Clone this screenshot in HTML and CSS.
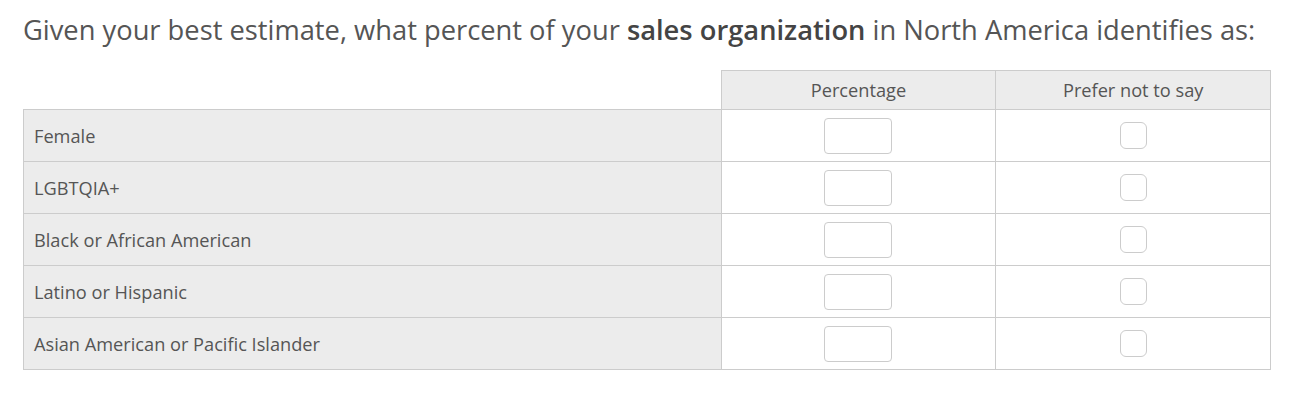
FILE: index.html
```html
<!DOCTYPE html>
<html lang="en">
<head>
  <meta charset="UTF-8">
  <title>Survey Question</title>
  <link rel="stylesheet" href="styles.css">
</head>
<body>
  <div class="question">
    <h2 class="question-text">Given your best estimate, what percent of your <strong>sales organization</strong> in North America identifies as:</h2>

    <table class="matrix">
      <thead>
        <tr>
          <th class="blank"></th>
          <th>Percentage</th>
          <th>Prefer not to say</th>
        </tr>
      </thead>
      <tbody>
        <tr>
          <td class="row-label">Female</td>
          <td class="cell"><input type="text" class="pct-input"></td>
          <td class="cell"><input type="checkbox" class="check"></td>
        </tr>
        <tr>
          <td class="row-label">LGBTQIA+</td>
          <td class="cell"><input type="text" class="pct-input"></td>
          <td class="cell"><input type="checkbox" class="check"></td>
        </tr>
        <tr>
          <td class="row-label">Black or African American</td>
          <td class="cell"><input type="text" class="pct-input"></td>
          <td class="cell"><input type="checkbox" class="check"></td>
        </tr>
        <tr>
          <td class="row-label">Latino or Hispanic</td>
          <td class="cell"><input type="text" class="pct-input"></td>
          <td class="cell"><input type="checkbox" class="check"></td>
        </tr>
        <tr>
          <td class="row-label">Asian American or Pacific Islander</td>
          <td class="cell"><input type="text" class="pct-input"></td>
          <td class="cell"><input type="checkbox" class="check"></td>
        </tr>
      </tbody>
    </table>
  </div>
</body>
</html>
```

FILE: styles.css
```css
body {
  margin: 0;
  padding: 0;
  font-family: 'Open Sans', sans-serif;
  color: #555;
  background: #fff;
}

.question {
  padding: 11px 19px 0 23px;
}

.question-text {
  margin: 0 0 22px 0;
  font-size: 27.3px;
  font-weight: normal;
  line-height: 37px;
  color: #555;
}

.question-text strong {
  font-weight: 600;
  color: #444;
}

.matrix {
  width: 1248px;
  border-collapse: collapse;
  font-size: 18.2px;
}

.matrix th {
  height: 38px;
  background: #ececec;
  border: 1px solid #ccc;
  font-weight: normal;
  color: #555;
  text-align: center;
  padding: 0;
}

.matrix th.blank {
  background: #fff;
  border-top: none;
  border-left: none;
  width: 698px;
}

.matrix td {
  height: 51px;
  border: 1px solid #ccc;
  padding: 0;
}

.row-label {
  background: #ececec;
  padding-left: 10px !important;
  color: #555;
}

.cell {
  text-align: center;
  width: 274px;
}

.pct-input {
  width: 68px;
  height: 36px;
  box-sizing: border-box;
  border: 1px solid #ccc;
  border-radius: 4px;
  background: #fff;
  vertical-align: middle;
}

.check {
  appearance: none;
  -webkit-appearance: none;
  width: 27px;
  height: 27px;
  margin: 0;
  border: 1px solid #ccc;
  border-radius: 6px;
  background: #fff;
  vertical-align: middle;
}
```
